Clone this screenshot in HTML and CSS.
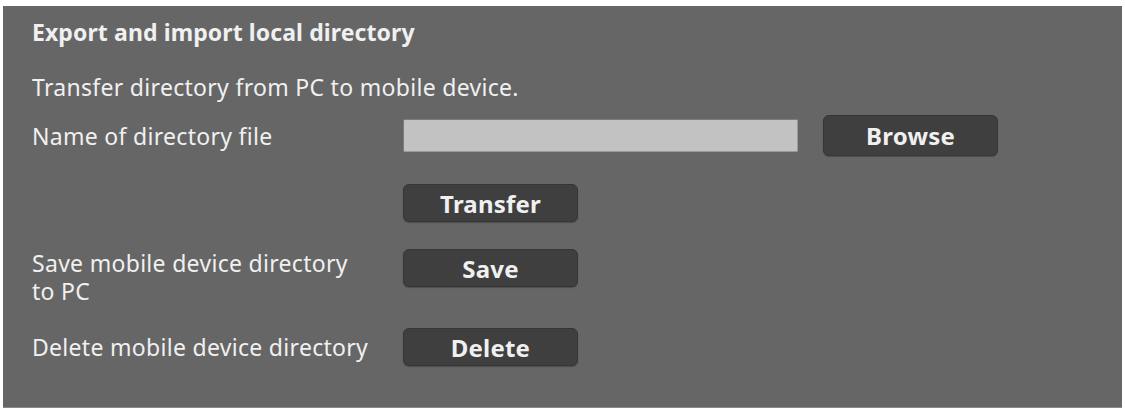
FILE: index.html
```html
<!DOCTYPE html>
<html>
  <head>
    <meta name="viewport" content="width=device-width, initial-scale=1">
    <link rel="stylesheet" href="styles.css">
  </head>
  <body>
    <div class="panel">
      <h2 class="title">Export and import local directory</h2>
      <p class="intro">Transfer directory from PC to mobile device.</p>

      <div class="row row-file">
        <label class="label" for="dirfile">Name of directory file</label>
        <div class="controls">
          <input type="text" id="dirfile" class="filebox">
          <button type="button" class="btn btn-browse">Browse</button>
        </div>
      </div>

      <div class="row row-transfer">
        <span class="label"></span>
        <div class="controls">
          <button type="button" class="btn">Transfer</button>
        </div>
      </div>

      <div class="row row-save">
        <span class="label label-two">Save mobile device directory<br>to PC</span>
        <div class="controls">
          <button type="button" class="btn">Save</button>
        </div>
      </div>

      <div class="row row-delete">
        <span class="label">Delete mobile device directory</span>
        <div class="controls">
          <button type="button" class="btn">Delete</button>
        </div>
      </div>
    </div>
  </body>
</html>
```

FILE: styles.css
```css
body {
  margin: 0;
  background-color: white;
  font-family: "Noto Sans", "Open Sans", sans-serif;
}

.panel {
  margin: 6px 3px 0 3px;
  height: 402px;
  box-sizing: border-box;
  background: #666666;
  border-bottom: 1px solid #8a8a8a;
  padding: 13px 0 0 29px;
  color: #f0f0f0;
  font-size: 23px;
  letter-spacing: 0.3px;
}

.title {
  margin: 0;
  font-size: 23px;
  line-height: 26px;
  font-weight: bold;
  letter-spacing: 0.1px;
}

.intro {
  margin: 29px 0 0 0;
  line-height: 26px;
}

.row {
  display: grid;
  grid-template-columns: 371px auto;
  align-items: center;
}

.label {
  line-height: 26px;
}

.label-two {
  align-self: start;
  line-height: 28px;
}

.controls {
  display: flex;
  align-items: center;
}

.row-file {
  margin-top: 15px;
}

.row-transfer {
  margin-top: 28px;
}

.row-save {
  margin-top: 27px;
  align-items: start;
}

.row-delete {
  margin-top: 23px;
}

.filebox {
  width: 395px;
  height: 33px;
  box-sizing: border-box;
  margin: 0;
  background: #c2c2c2;
  border: 1px solid #9a9a9a;
  border-top-color: #7c7c7c;
  border-left-color: #7c7c7c;
  border-radius: 2px;
  outline: none;
}

.btn {
  width: 175px;
  height: 38px;
  margin: 0;
  padding: 0;
  background: #3f3f3f;
  border: 1px solid #363636;
  border-radius: 6px;
  box-shadow: 0 1px 1px rgba(0, 0, 0, 0.25);
  color: #f0f0f0;
  font-family: "Noto Sans", "Open Sans", sans-serif;
  font-size: 24px;
  font-weight: bold;
  letter-spacing: 0.2px;
}

.btn-browse {
  height: 41px;
  margin-left: 25px;
}
```
